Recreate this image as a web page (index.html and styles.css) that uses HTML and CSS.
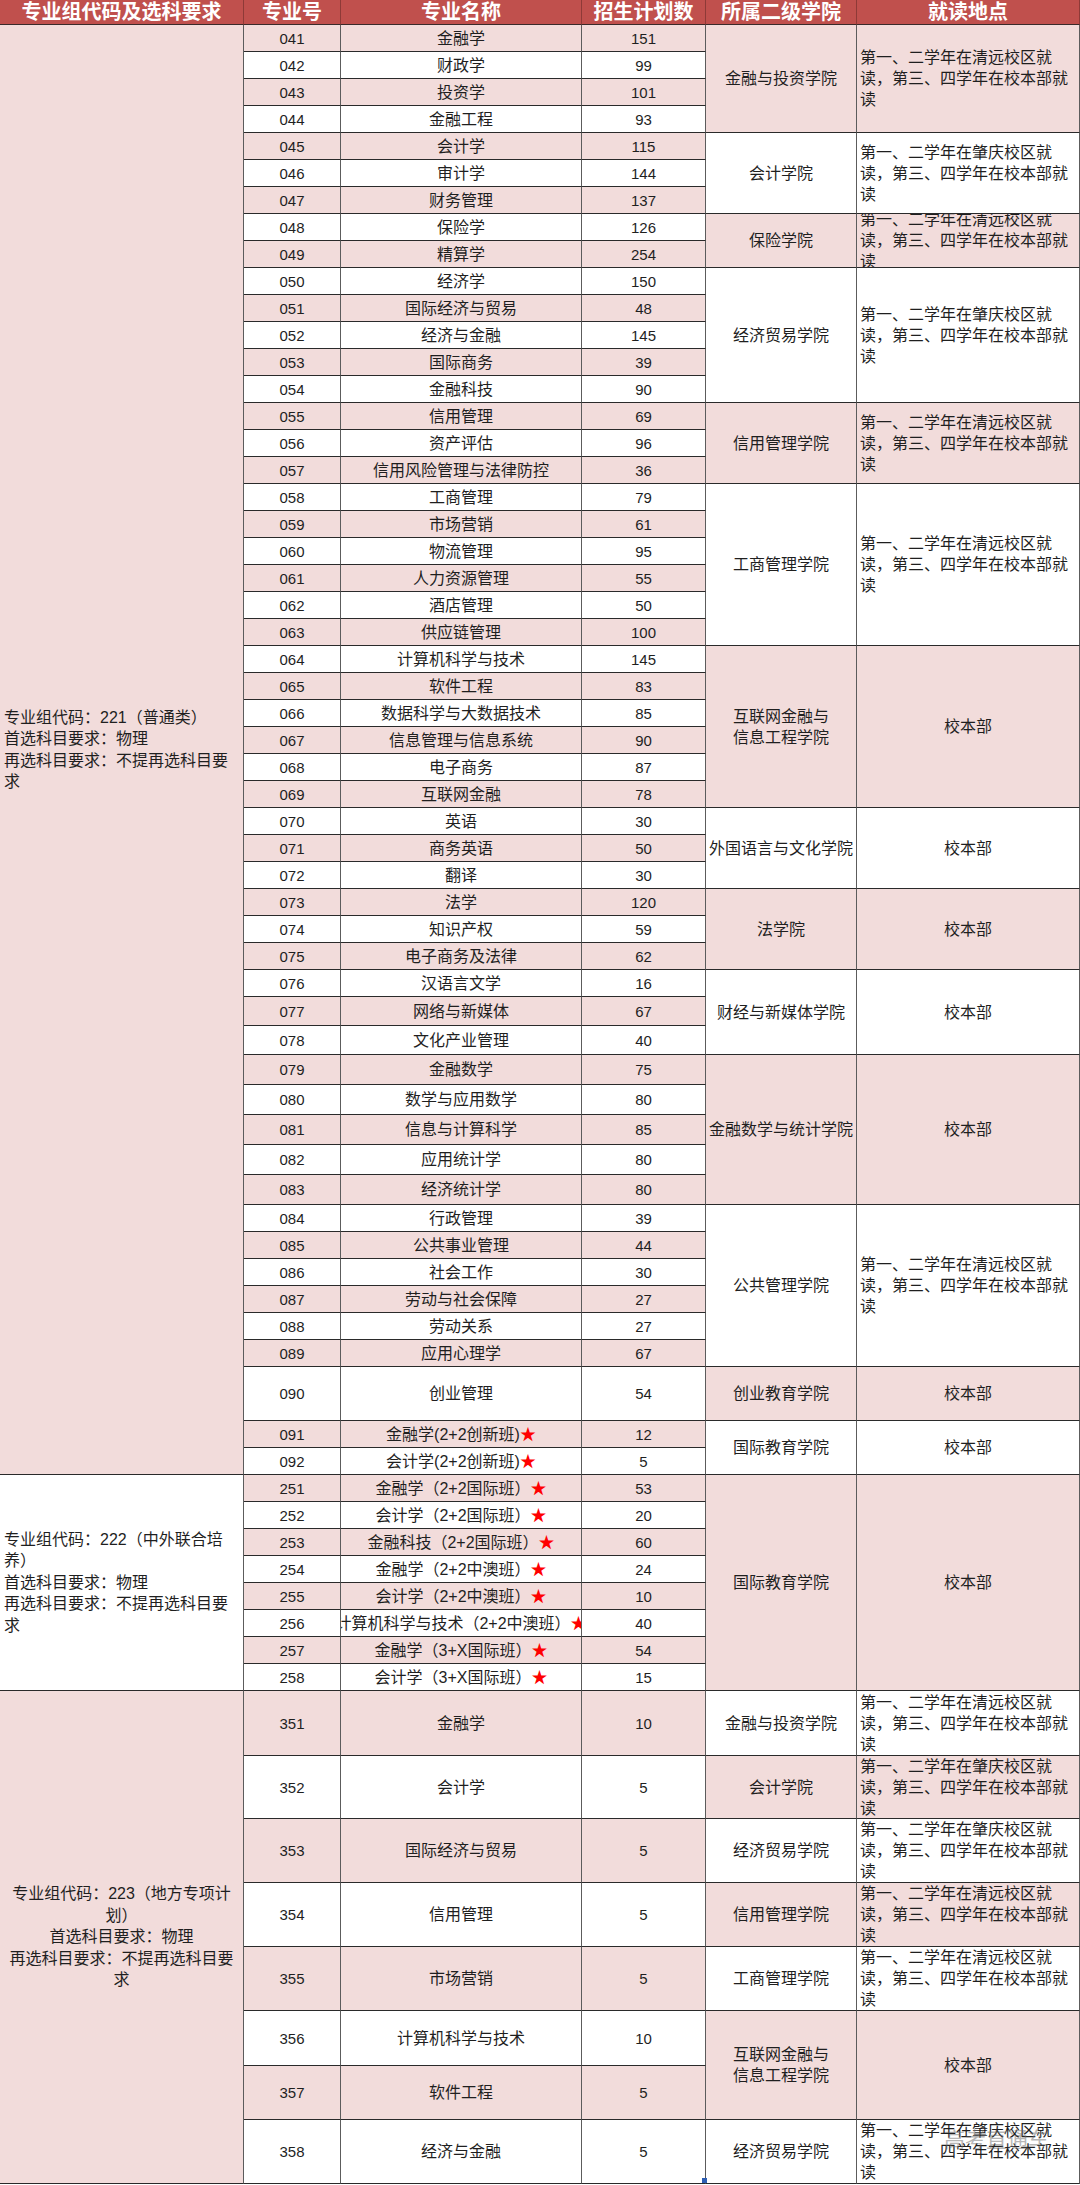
FILE: index.html
```html
<!DOCTYPE html>
<html lang="zh-CN">
<head>
<meta charset="utf-8">
<title>专业组招生计划</title>
<link rel="stylesheet" href="styles.css">
</head>
<body>
<div class="sheet">
  <div class="c h">专业组代码及选科要求</div>
  <div class="c h">专业号</div>
  <div class="c h">专业名称</div>
  <div class="c h">招生计划数</div>
  <div class="c h">所属二级学院</div>
  <div class="c h">就读地点</div>

  <!-- 041 -->
  <div class="c g p rs52">专业组代码：221（普通类）<br>首选科目要求：物理<br>再选科目要求：不提再选科目要求</div>
  <div class="c n p">041</div><div class="c m p">金融学</div><div class="c n p">151</div>
  <div class="c p rs4">金融与投资学院</div>
  <div class="c l p rs4">第一、二学年在清远校区就读，第三、四学年在校本部就读</div>
  <div class="c n">042</div><div class="c m">财政学</div><div class="c n">99</div>
  <div class="c n p">043</div><div class="c m p">投资学</div><div class="c n p">101</div>
  <div class="c n">044</div><div class="c m">金融工程</div><div class="c n">93</div>
  <!-- 045 -->
  <div class="c n p">045</div><div class="c m p">会计学</div><div class="c n p">115</div>
  <div class="c rs3">会计学院</div>
  <div class="c l rs3">第一、二学年在肇庆校区就读，第三、四学年在校本部就读</div>
  <div class="c n">046</div><div class="c m">审计学</div><div class="c n">144</div>
  <div class="c n p">047</div><div class="c m p">财务管理</div><div class="c n p">137</div>
  <!-- 048 -->
  <div class="c n">048</div><div class="c m">保险学</div><div class="c n">126</div>
  <div class="c p rs2">保险学院</div>
  <div class="c l p rs2">第一、二学年在清远校区就读，第三、四学年在校本部就读</div>
  <div class="c n p">049</div><div class="c m p">精算学</div><div class="c n p">254</div>
  <!-- 050 -->
  <div class="c n">050</div><div class="c m">经济学</div><div class="c n">150</div>
  <div class="c rs5">经济贸易学院</div>
  <div class="c l rs5">第一、二学年在肇庆校区就读，第三、四学年在校本部就读</div>
  <div class="c n p">051</div><div class="c m p">国际经济与贸易</div><div class="c n p">48</div>
  <div class="c n">052</div><div class="c m">经济与金融</div><div class="c n">145</div>
  <div class="c n p">053</div><div class="c m p">国际商务</div><div class="c n p">39</div>
  <div class="c n">054</div><div class="c m">金融科技</div><div class="c n">90</div>
  <!-- 055 -->
  <div class="c n p">055</div><div class="c m p">信用管理</div><div class="c n p">69</div>
  <div class="c p rs3">信用管理学院</div>
  <div class="c l p rs3">第一、二学年在清远校区就读，第三、四学年在校本部就读</div>
  <div class="c n">056</div><div class="c m">资产评估</div><div class="c n">96</div>
  <div class="c n p">057</div><div class="c m p">信用风险管理与法律防控</div><div class="c n p">36</div>
  <!-- 058 -->
  <div class="c n">058</div><div class="c m">工商管理</div><div class="c n">79</div>
  <div class="c rs6">工商管理学院</div>
  <div class="c l rs6">第一、二学年在清远校区就读，第三、四学年在校本部就读</div>
  <div class="c n p">059</div><div class="c m p">市场营销</div><div class="c n p">61</div>
  <div class="c n">060</div><div class="c m">物流管理</div><div class="c n">95</div>
  <div class="c n p">061</div><div class="c m p">人力资源管理</div><div class="c n p">55</div>
  <div class="c n">062</div><div class="c m">酒店管理</div><div class="c n">50</div>
  <div class="c n p">063</div><div class="c m p">供应链管理</div><div class="c n p">100</div>
  <!-- 064 -->
  <div class="c n">064</div><div class="c m">计算机科学与技术</div><div class="c n">145</div>
  <div class="c p rs6">互联网金融与<br>信息工程学院</div>
  <div class="c p rs6">校本部</div>
  <div class="c n p">065</div><div class="c m p">软件工程</div><div class="c n p">83</div>
  <div class="c n">066</div><div class="c m">数据科学与大数据技术</div><div class="c n">85</div>
  <div class="c n p">067</div><div class="c m p">信息管理与信息系统</div><div class="c n p">90</div>
  <div class="c n">068</div><div class="c m">电子商务</div><div class="c n">87</div>
  <div class="c n p">069</div><div class="c m p">互联网金融</div><div class="c n p">78</div>
  <!-- 070 -->
  <div class="c n">070</div><div class="c m">英语</div><div class="c n">30</div>
  <div class="c rs3">外国语言与文化学院</div>
  <div class="c rs3">校本部</div>
  <div class="c n p">071</div><div class="c m p">商务英语</div><div class="c n p">50</div>
  <div class="c n">072</div><div class="c m">翻译</div><div class="c n">30</div>
  <!-- 073 -->
  <div class="c n p">073</div><div class="c m p">法学</div><div class="c n p">120</div>
  <div class="c p rs3">法学院</div>
  <div class="c p rs3">校本部</div>
  <div class="c n">074</div><div class="c m">知识产权</div><div class="c n">59</div>
  <div class="c n p">075</div><div class="c m p">电子商务及法律</div><div class="c n p">62</div>
  <!-- 076 -->
  <div class="c n">076</div><div class="c m">汉语言文学</div><div class="c n">16</div>
  <div class="c rs3">财经与新媒体学院</div>
  <div class="c rs3">校本部</div>
  <div class="c n p">077</div><div class="c m p">网络与新媒体</div><div class="c n p">67</div>
  <div class="c n">078</div><div class="c m">文化产业管理</div><div class="c n">40</div>
  <!-- 079 -->
  <div class="c n p">079</div><div class="c m p">金融数学</div><div class="c n p">75</div>
  <div class="c p rs5">金融数学与统计学院</div>
  <div class="c p rs5">校本部</div>
  <div class="c n">080</div><div class="c m">数学与应用数学</div><div class="c n">80</div>
  <div class="c n p">081</div><div class="c m p">信息与计算科学</div><div class="c n p">85</div>
  <div class="c n">082</div><div class="c m">应用统计学</div><div class="c n">80</div>
  <div class="c n p">083</div><div class="c m p">经济统计学</div><div class="c n p">80</div>
  <!-- 084 -->
  <div class="c n">084</div><div class="c m">行政管理</div><div class="c n">39</div>
  <div class="c rs6">公共管理学院</div>
  <div class="c l rs6">第一、二学年在清远校区就读，第三、四学年在校本部就读</div>
  <div class="c n p">085</div><div class="c m p">公共事业管理</div><div class="c n p">44</div>
  <div class="c n">086</div><div class="c m">社会工作</div><div class="c n">30</div>
  <div class="c n p">087</div><div class="c m p">劳动与社会保障</div><div class="c n p">27</div>
  <div class="c n">088</div><div class="c m">劳动关系</div><div class="c n">27</div>
  <div class="c n p">089</div><div class="c m p">应用心理学</div><div class="c n p">67</div>
  <!-- 090 -->
  <div class="c n">090</div><div class="c m">创业管理</div><div class="c n">54</div>
  <div class="c p">创业教育学院</div>
  <div class="c p">校本部</div>
  <!-- 091 -->
  <div class="c n p">091</div><div class="c m p">金融学(2+2创新班)<span class="star">★</span></div><div class="c n p">12</div>
  <div class="c rs2">国际教育学院</div>
  <div class="c rs2">校本部</div>
  <div class="c n">092</div><div class="c m">会计学(2+2创新班)<span class="star">★</span></div><div class="c n">5</div>

  <!-- 251 -->
  <div class="c g rs8">专业组代码：222（中外联合培养）<br>首选科目要求：物理<br>再选科目要求：不提再选科目要求</div>
  <div class="c n p">251</div><div class="c m p">金融学（2+2国际班）<span class="star">★</span></div><div class="c n p">53</div>
  <div class="c p rs8">国际教育学院</div>
  <div class="c p rs8">校本部</div>
  <div class="c n">252</div><div class="c m">会计学（2+2国际班）<span class="star">★</span></div><div class="c n">20</div>
  <div class="c n p">253</div><div class="c m p">金融科技（2+2国际班）<span class="star">★</span></div><div class="c n p">60</div>
  <div class="c n">254</div><div class="c m">金融学（2+2中澳班）<span class="star">★</span></div><div class="c n">24</div>
  <div class="c n p">255</div><div class="c m p">会计学（2+2中澳班）<span class="star">★</span></div><div class="c n p">10</div>
  <div class="c n">256</div><div class="c m">计算机科学与技术（2+2中澳班）<span class="star">★</span></div><div class="c n">40</div>
  <div class="c n p">257</div><div class="c m p">金融学（3+X国际班）<span class="star">★</span></div><div class="c n p">54</div>
  <div class="c n">258</div><div class="c m">会计学（3+X国际班）<span class="star">★</span></div><div class="c n">15</div>

  <!-- 351 -->
  <div class="c g gc p rs8">专业组代码：223（地方专项计划）<br>首选科目要求：物理<br>再选科目要求：不提再选科目要求</div>
  <div class="c n p">351</div><div class="c m p">金融学</div><div class="c n p">10</div>
  <div class="c">金融与投资学院</div>
  <div class="c l">第一、二学年在清远校区就读，第三、四学年在校本部就读</div>
  <div class="c n">352</div><div class="c m">会计学</div><div class="c n">5</div>
  <div class="c p">会计学院</div>
  <div class="c l p">第一、二学年在肇庆校区就读，第三、四学年在校本部就读</div>
  <div class="c n p">353</div><div class="c m p">国际经济与贸易</div><div class="c n p">5</div>
  <div class="c">经济贸易学院</div>
  <div class="c l">第一、二学年在肇庆校区就读，第三、四学年在校本部就读</div>
  <div class="c n">354</div><div class="c m">信用管理</div><div class="c n">5</div>
  <div class="c p">信用管理学院</div>
  <div class="c l p">第一、二学年在清远校区就读，第三、四学年在校本部就读</div>
  <div class="c n p">355</div><div class="c m p">市场营销</div><div class="c n p">5</div>
  <div class="c">工商管理学院</div>
  <div class="c l">第一、二学年在清远校区就读，第三、四学年在校本部就读</div>
  <div class="c n">356</div><div class="c m">计算机科学与技术</div><div class="c n">10</div>
  <div class="c p rs2">互联网金融与<br>信息工程学院</div>
  <div class="c p rs2">校本部</div>
  <div class="c n p">357</div><div class="c m p">软件工程</div><div class="c n p">5</div>
  <div class="c n">358</div><div class="c m">经济与金融</div><div class="c n">5</div>
  <div class="c">经济贸易学院</div>
  <div class="c l">第一、二学年在肇庆校区就读，第三、四学年在校本部就读</div>

  <span class="handle"></span>
  <div class="wm">高考直通车</div>
</div>
</body>
</html>
```

FILE: styles.css
```css
html, body {
  margin: 0;
  padding: 0;
  background: #ffffff;
}

body {
  font-family: "Liberation Sans", "Noto Sans CJK SC", sans-serif;
  color: #1f1f1f;
}

.sheet {
  position: relative;
  width: 1080px;
  display: grid;
  grid-template-columns: 244px 97px 241px 124px 151px 223px;
  grid-template-rows:
    25px
    repeat(36, 27px)
    29px 29px
    repeat(5, 30px)
    repeat(6, 27px)
    54px
    27px 27px
    repeat(8, 27px)
    65px 63px 64px 64px 64px 55px 54px 64px;
}

.c {
  box-sizing: border-box;
  border-right: 1px solid #5c5c5c;
  border-bottom: 1px solid #2a2a2a;
  display: flex;
  align-items: center;
  justify-content: center;
  text-align: center;
  overflow: hidden;
  font-size: 16px;
  line-height: 21px;
  background: #ffffff;
}

.p {
  background: #f2dcdb;
}

.h {
  background: #c0504d;
  color: #ffffff;
  font-weight: bold;
  font-size: 20px;
  line-height: 24px;
  border-right: 1px solid #8e3a37;
  border-bottom: 1px solid #3a2a2a;
  white-space: nowrap;
}

.n {
  font-size: 15px;
}

.m {
  white-space: nowrap;
}

.l {
  justify-content: flex-start;
  text-align: left;
  padding-left: 3px;
  padding-right: 4px;
}

.g {
  justify-content: flex-start;
  text-align: left;
  padding: 0 10px 0 4px;
  line-height: 21.5px;
}

.gc {
  justify-content: center;
  text-align: center;
  padding: 0 7px;
}

.star {
  color: #ff0000;
}

.rs2 { grid-row: span 2; }
.rs3 { grid-row: span 3; }
.rs4 { grid-row: span 4; }
.rs5 { grid-row: span 5; }
.rs6 { grid-row: span 6; }
.rs8 { grid-row: span 8; }
.rs52 { grid-row: span 52; }

.handle {
  position: absolute;
  left: 702px;
  top: 2178px;
  width: 5px;
  height: 5px;
  background: #2f5fb3;
}

.wm {
  position: absolute;
  left: 944px;
  top: 2126px;
  font-size: 21px;
  line-height: 24px;
  color: rgba(110, 110, 110, 0.5);
  font-family: "Noto Sans CJK SC", sans-serif;
  pointer-events: none;
}
```
